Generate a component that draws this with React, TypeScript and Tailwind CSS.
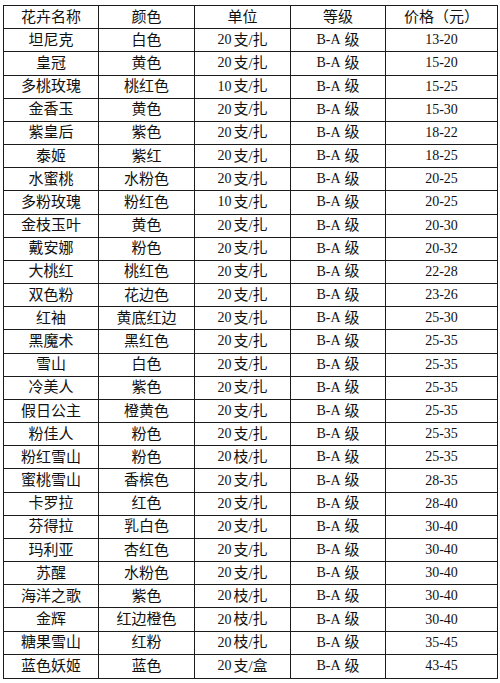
import React from "react";

const rows: string[][] = [
  ["坦尼克", "白色", "20支/扎", "B-A级", "13-20"],
  ["皇冠", "黄色", "20支/扎", "B-A级", "15-20"],
  ["多桃玫瑰", "桃红色", "10支/扎", "B-A级", "15-25"],
  ["金香玉", "黄色", "20支/扎", "B-A级", "15-30"],
  ["紫皇后", "紫色", "20支/扎", "B-A级", "18-22"],
  ["泰姬", "紫红", "20支/扎", "B-A级", "18-25"],
  ["水蜜桃", "水粉色", "20支/扎", "B-A级", "20-25"],
  ["多粉玫瑰", "粉红色", "10支/扎", "B-A级", "20-25"],
  ["金枝玉叶", "黄色", "20支/扎", "B-A级", "20-30"],
  ["戴安娜", "粉色", "20支/扎", "B-A级", "20-32"],
  ["大桃红", "桃红色", "20支/扎", "B-A级", "22-28"],
  ["双色粉", "花边色", "20支/扎", "B-A级", "23-26"],
  ["红袖", "黄底红边", "20支/扎", "B-A级", "25-30"],
  ["黑魔术", "黑红色", "20支/扎", "B-A级", "25-35"],
  ["雪山", "白色", "20支/扎", "B-A级", "25-35"],
  ["冷美人", "紫色", "20支/扎", "B-A级", "25-35"],
  ["假日公主", "橙黄色", "20支/扎", "B-A级", "25-35"],
  ["粉佳人", "粉色", "20支/扎", "B-A级", "25-35"],
  ["粉红雪山", "粉色", "20枝/扎", "B-A级", "25-35"],
  ["蜜桃雪山", "香槟色", "20支/扎", "B-A级", "28-35"],
  ["卡罗拉", "红色", "20支/扎", "B-A级", "28-40"],
  ["芬得拉", "乳白色", "20支/扎", "B-A级", "30-40"],
  ["玛利亚", "杏红色", "20支/扎", "B-A级", "30-40"],
  ["苏醒", "水粉色", "20支/扎", "B-A级", "30-40"],
  ["海洋之歌", "紫色", "20枝/扎", "B-A级", "30-40"],
  ["金辉", "红边橙色", "20枝/扎", "B-A级", "30-40"],
  ["糖果雪山", "红粉", "20枝/扎", "B-A级", "35-45"],
  ["蓝色妖姬", "蓝色", "20支/盒", "B-A级", "43-45"],
];

const header = ["花卉名称", "颜色", "单位", "等级", "价格（元）"];

const font = {
  fontFamily: '"Liberation Serif", "Noto Sans CJK SC", serif',
};

function Unit({ s }: { s: string }) {
  const m = s.match(/^(\d+)(.*)$/);
  if (!m) return <>{s}</>;
  return (
    <>
      <span className="text-[14px]">{m[1]}</span>
      <span className="ml-[2px]">{m[2]}</span>
    </>
  );
}

function Grade() {
  return (
    <>
      <span className="text-[14px]">B-A</span>
      <span className="ml-[4px]">级</span>
    </>
  );
}

export default function App() {
  const all = [header, ...rows];
  return (
    <div className="w-[500px] h-[683px] bg-white pt-[5px] pl-[3px]" style={font}>
      <div className="w-[495px] h-[674px] border border-[#1c1c1c] grid grid-cols-[95px_96px_96px_95px_1fr] grid-rows-[repeat(29,minmax(0,1fr))] text-[15px] text-[#111]">
        {all.map((r, i) =>
          r.map((c, j) => (
            <div
              key={i + "-" + j}
              className={
                "flex items-center justify-center leading-none " +
                (j < 4 ? "border-r border-[#1c1c1c] " : "") +
                (i < all.length - 1 ? "border-b border-[#1c1c1c]" : "")
              }
            >
              {i > 0 && j === 2 ? (
                <Unit s={c} />
              ) : i > 0 && j === 3 ? (
                <Grade />
              ) : i > 0 && j === 4 ? (
                <span className="text-[14px]">{c}</span>
              ) : (
                c
              )}
            </div>
          ))
        )}
      </div>
    </div>
  );
}
